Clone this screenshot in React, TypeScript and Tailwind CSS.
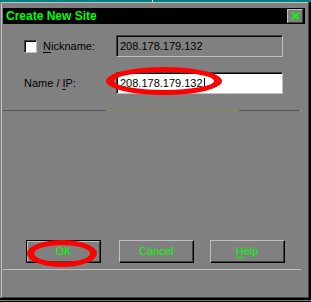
import React from "react";

export default function App() {
  return (
    <div className="relative w-[311px] h-[302px] bg-black overflow-hidden flex flex-col font-['Liberation_Sans',Arial,sans-serif] text-[11px] leading-none text-black">
      {/* teal desktop strip */}
      <div className="h-[2px] w-full bg-[#008080] flex">
        <div className="ml-[152px] w-[1px] h-full bg-white" />
      </div>
      {/* window frame */}
      <div className="w-[309px] h-[296px] bg-[#808080] pl-[1px]">
        <div className="h-full w-full border-t border-l border-[#c0c0c0] border-r border-r-[#404040] border-b border-b-[#404040] flex flex-col">
          {/* title bar */}
          <div className="mt-[5px] ml-[1px] w-[302px] h-[16px] bg-black flex items-center">
            <span className="ml-[3px] text-[12px] font-bold text-[#00ff00] tracking-[0px]">Create New Site</span>
            <div className="ml-auto mr-[2px] w-[16px] h-[14px] bg-[#808080] border-t border-l border-[#c0c0c0] border-r border-b border-r-[#404040] border-b-[#404040] flex items-center justify-center">
              <svg width="9" height="8" viewBox="0 0 9 8">
                <path d="M1 0.5 L8 7.5 M8 0.5 L1 7.5" stroke="#00ff00" strokeWidth="1.8" />
              </svg>
            </div>
          </div>

          {/* Nickname row */}
          <div className="mt-[11px] flex items-center h-[22px]">
            <div className="w-[114px] flex items-center pl-[22px]">
              <div className="w-[13px] h-[13px] bg-[#c0c0c0] border-t border-l border-[#404040] border-r border-b border-r-[#c0c0c0] border-b-[#c0c0c0]">
                <div className="w-full h-full bg-white border-t border-l border-black border-r-0 border-b-0" />
              </div>
              <span className="ml-[6px]">
                <u className="underline-offset-[2px]">N</u>ickname:
              </span>
            </div>
            <div className="w-[167px] h-[22px] border-t border-l border-[#404040] border-r border-b border-r-[#c0c0c0] border-b-[#c0c0c0]">
              <div className="w-full h-full border-t border-l border-black flex items-center pl-[2px] bg-[#808080]">
                <span className="-mt-[1px]">208.178.179.132</span>
              </div>
            </div>
          </div>

          {/* Name / IP row */}
          <div className="mt-[15px] flex items-center h-[22px]">
            <div className="w-[114px] pl-[22px]">
              Name / <u className="underline-offset-[2px]">I</u>P:
            </div>
            <div className="w-[167px] h-[22px] border-t border-l border-[#404040] border-r border-b border-r-[#c0c0c0] border-b-[#c0c0c0]">
              <div className="w-full h-full border-t border-l border-black flex items-center pl-[2px] bg-white">
                <span className="-mt-[1px]">208.178.179.132</span>
                <span className="ml-[1px] inline-block w-[1px] h-[12px] bg-black" />
              </div>
            </div>
          </div>

          {/* separator */}
          <div className="mt-[16px] ml-[1px] w-[298px] h-[1px] bg-[#555555] flex">
            <div className="ml-[103px] w-[133px] h-full bg-[#8c8c50]" />
            <div className="ml-auto w-[1px] h-full bg-[#c0c0c0]" />
          </div>

          {/* buttons */}
          <div className="mt-[129px] flex h-[23px]">
            <div className="ml-[24px] w-[75px] h-[23px] border border-black">
              <div className="w-full h-full border-t border-l border-[#c0c0c0] border-r border-b border-r-[#404040] border-b-[#404040] flex items-center justify-center text-[#00ff00]">
                OK
              </div>
            </div>
            <div className="ml-[18px] w-[75px] h-[23px] border-t border-l border-[#c0c0c0] border-r border-b border-r-black border-b-black">
              <div className="w-full h-full border-r border-b border-[#404040] flex items-center justify-center text-[#00ff00]">
                Cancel
              </div>
            </div>
            <div className="ml-[16px] w-[75px] h-[23px] border-t border-l border-[#c0c0c0] border-r border-b border-r-black border-b-black">
              <div className="w-full h-full border-r border-b border-[#404040] flex items-center justify-center text-[#00ff00]">
                <span>
                  <u className="underline-offset-[2px]">H</u>elp
                </span>
              </div>
            </div>
          </div>

          {/* bottom line */}
          <div className="mt-[6px] ml-[1px] w-[298px] h-[1px] bg-[#c0c0c0]" />
        </div>
      </div>
      <div className="mt-[2px] h-[1px] w-full bg-[#808080]" />

      {/* red annotation ellipses */}
      <div className="absolute left-[106px] top-[67px] w-[116px] h-[28px] rounded-[50%] border-y-[5px] border-x-[8px] border-[#ff0000]" />
      <div className="absolute left-[27px] top-[240px] w-[70px] h-[27px] rounded-[50%] border-y-[5px] border-x-[7px] border-[#ff0000]" />
    </div>
  );
}
